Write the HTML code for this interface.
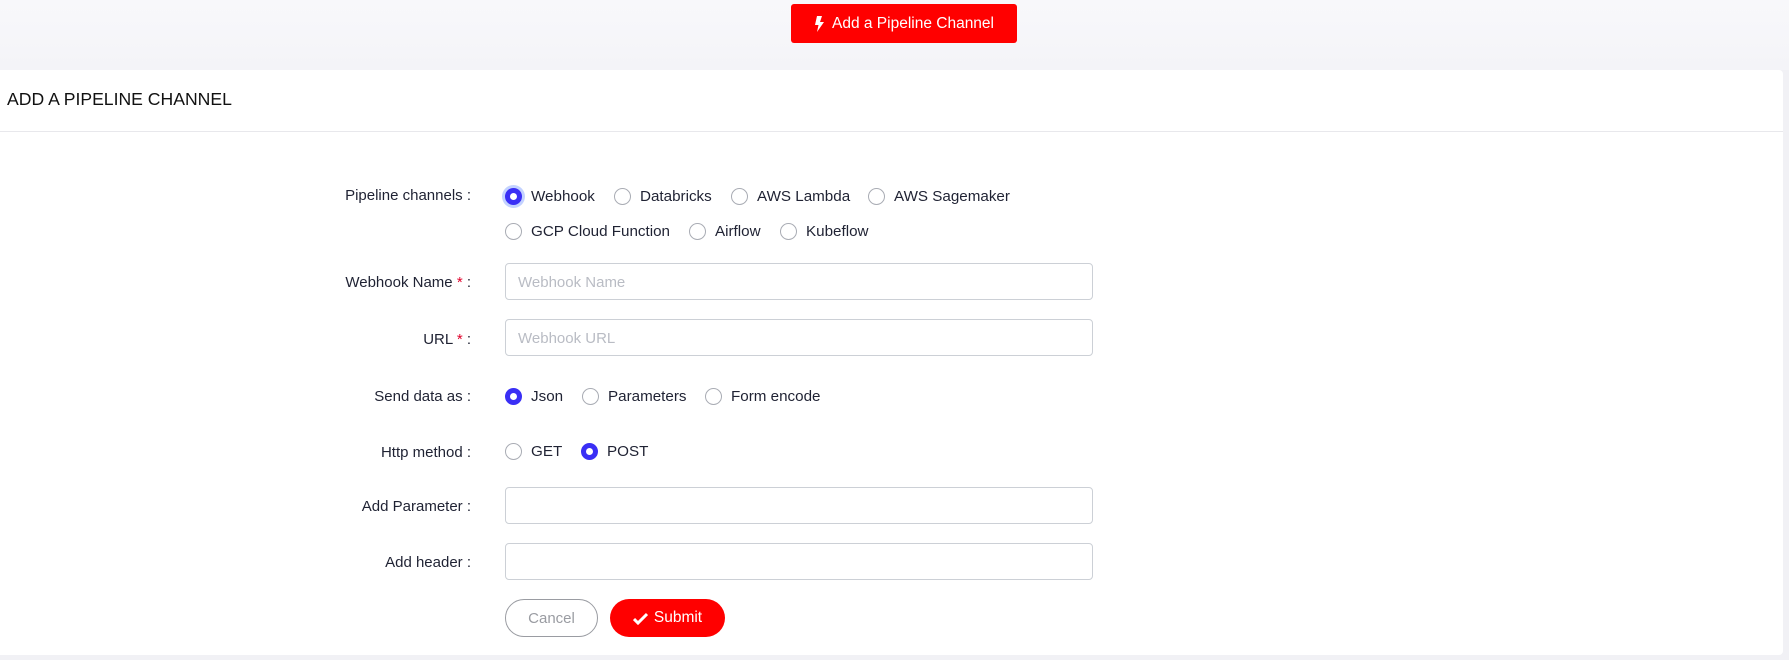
<!DOCTYPE html>
<html><head><meta charset="utf-8"><style>
*{box-sizing:border-box;margin:0;padding:0}
body{width:1789px;height:660px;background:#f1f1f5;font-family:"Liberation Sans",sans-serif;color:#1f2233;position:relative;overflow:hidden}
.top{position:absolute;left:0;top:0;width:1789px;height:70px;background:linear-gradient(#f8f8fb,#f4f4f8)}
.btn{position:absolute;left:791px;top:4px;width:226px;height:39px;background:#ff0000;border-radius:3px;color:#fff;font-size:15.5px;display:flex;align-items:center;justify-content:center;gap:8px}
.card{position:absolute;left:0;top:70px;width:1783px;height:585px;background:#fff;border-radius:0 4px 4px 0}
.hd{position:absolute;left:7px;top:89px;font-size:17.6px;color:#111}
.line{position:absolute;left:0;top:131px;width:1783px;height:1px;background:#e8e8ec}
.lbl{position:absolute;right:1318px;font-size:15px;color:#1f2233;white-space:nowrap}
.lbl b{color:#e0002a;font-weight:normal}
.r{position:absolute;font-size:15.2px;white-space:nowrap;display:flex;align-items:center}
.c{width:17px;height:17px;border:1px solid #a9acb4;border-radius:50%;margin-right:9px;background:#fff}
.c.on{border:5px solid #3a2ff5;background:#fff}
.c.f{box-shadow:0 0 0 3px #c3d2ff}
.in{position:absolute;left:505px;width:588px;height:37px;border:1px solid #ccd0d6;border-radius:4px;font-size:15px;color:#b9bcc4;padding:10px 12px}
.cancel{position:absolute;left:505px;top:599px;width:93px;height:38px;border:1px solid #9a9ca2;border-radius:19px;color:#9a9ca2;font-size:15px;display:flex;align-items:center;justify-content:center}
.sub{position:absolute;left:610px;top:599px;width:115px;height:38px;background:#ff0000;border-radius:19px;color:#fff;font-size:15.5px;display:flex;align-items:center;justify-content:center;gap:6px}
</style></head><body>
<div class="top"></div>
<div class="btn"><svg width="10" height="16" viewBox="0 0 10 16"><path d="M3 0h5L6 6h4L3 16l1.5-7H1z" fill="#fff"/></svg>Add a Pipeline Channel</div>
<div class="card"></div>
<div class="hd">ADD A PIPELINE CHANNEL</div>
<div class="line"></div>

<div class="lbl" style="top:187px">Pipeline channels :</div>
<div class="r" style="left:505px;top:188px"><span class="c on f"></span>Webhook</div>
<div class="r" style="left:614px;top:188px"><span class="c"></span>Databricks</div>
<div class="r" style="left:731px;top:188px"><span class="c"></span>AWS Lambda</div>
<div class="r" style="left:868px;top:188px"><span class="c"></span>AWS Sagemaker</div>
<div class="r" style="left:505px;top:223px"><span class="c"></span>GCP Cloud Function</div>
<div class="r" style="left:689px;top:223px"><span class="c"></span>Airflow</div>
<div class="r" style="left:780px;top:223px"><span class="c"></span>Kubeflow</div>

<div class="lbl" style="top:274px">Webhook Name <b>*</b> :</div>
<div class="in" style="top:263px">Webhook Name</div>
<div class="lbl" style="top:331px">URL <b>*</b> :</div>
<div class="in" style="top:319px">Webhook URL</div>

<div class="lbl" style="top:388px">Send data as :</div>
<div class="r" style="left:505px;top:388px"><span class="c on"></span>Json</div>
<div class="r" style="left:582px;top:388px"><span class="c"></span>Parameters</div>
<div class="r" style="left:705px;top:388px"><span class="c"></span>Form encode</div>

<div class="lbl" style="top:444px">Http method :</div>
<div class="r" style="left:505px;top:443px"><span class="c"></span>GET</div>
<div class="r" style="left:581px;top:443px"><span class="c on"></span>POST</div>

<div class="lbl" style="top:498px">Add Parameter :</div>
<div class="in" style="top:487px"></div>
<div class="lbl" style="top:554px">Add header :</div>
<div class="in" style="top:543px"></div>

<div class="cancel">Cancel</div>
<div class="sub"><svg width="15" height="13" viewBox="0 0 15 13"><path d="M1 7l4 4 9-9" stroke="#fff" stroke-width="3" fill="none"/></svg>Submit</div>
</body></html>
